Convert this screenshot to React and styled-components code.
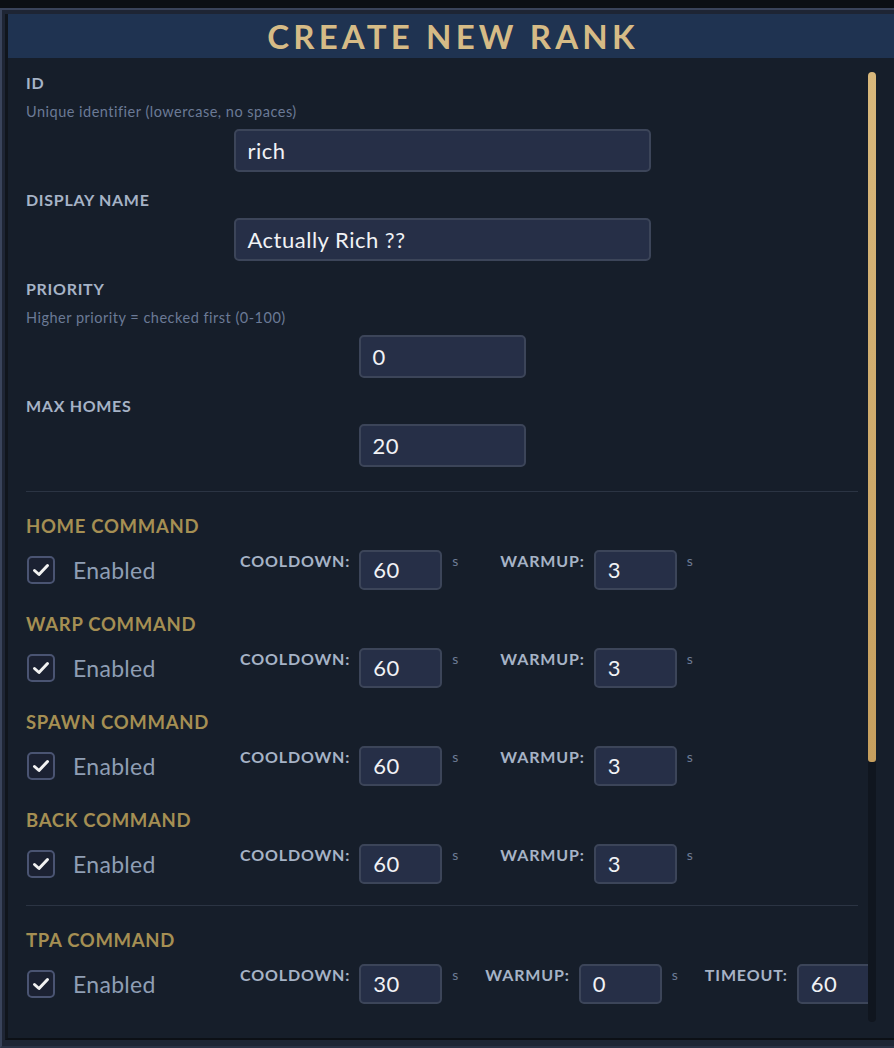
import React from 'react';
import styled, { createGlobalStyle } from 'styled-components';

const GlobalStyle = createGlobalStyle`
  html, body {
    margin: 0;
    padding: 0;
    background: #0b0f14;
    overflow: hidden;
  }
  * { box-sizing: border-box; }
`;

const Frame = styled.div`
  margin-top: 8px;
  height: 1040px;
  width: 904px;
  background: #1e2534;
  border-top: 2px solid #39435a;
  border-left: 2px solid #39435a;
  border-bottom: 2px solid #2a3245;
  padding: 4px 0 6px 3px;
  font-family: Lato, "Noto Sans", sans-serif;
`;

const Panel = styled.div`
  height: 100%;
  display: flex;
  flex-direction: column;
  border-left: 3px solid #10151c;
  border-bottom: 2px solid #0c1016;
  background: #161e2a;
`;

const Header = styled.div`
  height: 44px;
  flex: none;
  background: #1f3351;
  display: flex;
  align-items: center;
  justify-content: center;
  padding-right: 6px;
`;

const Title = styled.h1`
  margin: 0;
  font: 700 33px/1 Lato, sans-serif;
  letter-spacing: 4.2px;
  color: #d6bb86;
`;

const Body = styled.div`
  position: relative;
  flex: 1;
  overflow: hidden;
  width: 868px;
`;

const Content = styled.div`
  padding: 16px 18px 0 18px;
`;

const Field = styled.div`
  display: flex;
  flex-direction: column;
  margin-bottom: 19px;
`;

const Label = styled.div`
  font: 700 16px/18px Lato, sans-serif;
  color: #a6b3c6;
  letter-spacing: 0.7px;
  margin-bottom: 9px;
`;

const Hint = styled.div`
  font: 400 14.5px/18px Lato, sans-serif;
  color: #6b7a96;
  letter-spacing: 0.5px;
  margin: 2px 0 8px;
`;

const TextInput = styled.div`
  align-self: center;
  width: ${p => p.$w}px;
  height: ${p => p.$h || 43}px;
  background: #262f47;
  border: 2px solid #3c4559;
  border-radius: 5px;
  display: flex;
  align-items: center;
  padding-left: 12px;
  font: 400 22px/1 Lato, sans-serif;
  letter-spacing: 0.5px;
  color: #f1f2f5;
  flex: none;
`;

const Divider = styled.hr`
  border: none;
  border-top: 1px solid #2b3443;
  margin: ${p => p.$top}px 0 23px;
`;

const Section = styled.div`
  margin-bottom: 23px;
`;

const SectionTitle = styled.div`
  font: 700 18.5px/22px Lato, sans-serif;
  color: #a58f53;
  letter-spacing: 0.7px;
  margin-bottom: 13px;
`;

const Row = styled.div`
  display: flex;
  align-items: flex-start;
  height: 40px;
  gap: ${p => p.$gap}px;
`;

const Toggle = styled.label`
  width: ${p => p.$w}px;
  height: 40px;
  flex: none;
  display: flex;
  align-items: center;
  gap: 18px;
  padding-left: 1px;
  font: 400 23px/1 Lato, sans-serif;
  letter-spacing: 0.3px;
  color: #8f9eb4;
`;

const Box = styled.span`
  width: 28px;
  height: 28px;
  border: 2px solid #4a5472;
  border-radius: 5px;
  background: #1b2132;
  display: flex;
  align-items: center;
  justify-content: center;
`;

const Group = styled.div`
  display: flex;
  align-items: flex-start;
  flex: none;
`;

const SmallLabel = styled.span`
  font: 700 16px/18px Lato, sans-serif;
  letter-spacing: 0.85px;
  color: #a6b3c6;
  margin-top: 2px;
  margin-right: 9px;
`;

const Unit = styled.span`
  font: 400 14px/18px Lato, sans-serif;
  color: #6e7c96;
  margin: 2px 0 0 10px;
`;

const Track = styled.div`
  position: absolute;
  left: 860px;
  top: 14px;
  width: 8px;
  height: 950px;
  background: #10161f;
  border-radius: 4px;
`;

const Thumb = styled.div`
  height: 690px;
  border-radius: 4px 4px 3px 3px;
  background: linear-gradient(#d8b87c, #c69f5e);
`;

const Check = () => (
  <Box>
    <svg width="18" height="14" viewBox="0 0 18 14">
      <path d="M2.5 7.5 L7 11.5 L15.5 2.5" fill="none" stroke="#f2f2f2" strokeWidth="3" strokeLinecap="round" strokeLinejoin="round" />
    </svg>
  </Box>
);

const Timing = ({ label, value, unit = true }) => (
  <Group>
    <SmallLabel>{label}</SmallLabel>
    <TextInput $w={83} $h={40}>{value}</TextInput>
    {unit && <Unit>s</Unit>}
  </Group>
);

const commands = [
  { name: 'HOME COMMAND', cooldown: 60, warmup: 3 },
  { name: 'WARP COMMAND', cooldown: 60, warmup: 3 },
  { name: 'SPAWN COMMAND', cooldown: 60, warmup: 3 },
  { name: 'BACK COMMAND', cooldown: 60, warmup: 3 },
];

const App = () => {
  return (
    <>
      <GlobalStyle />
      <Frame>
        <Panel>
          <Header>
            <Title>CREATE NEW RANK</Title>
          </Header>
          <Body>
            <Content>
              <Field>
                <Label>ID</Label>
                <Hint>Unique identifier (lowercase, no spaces)</Hint>
                <TextInput $w={417}>rich</TextInput>
              </Field>
              <Field>
                <Label>DISPLAY NAME</Label>
                <TextInput $w={417}>Actually Rich ??</TextInput>
              </Field>
              <Field>
                <Label>PRIORITY</Label>
                <Hint>Higher priority = checked first (0-100)</Hint>
                <TextInput $w={167}>0</TextInput>
              </Field>
              <Field>
                <Label>MAX HOMES</Label>
                <TextInput $w={167}>20</TextInput>
              </Field>

              <Divider $top={24} />

              {commands.map(c => (
                <Section key={c.name}>
                  <SectionTitle>{c.name}</SectionTitle>
                  <Row $gap={42}>
                    <Toggle $w={172}><Check />Enabled</Toggle>
                    <Timing label="COOLDOWN:" value={c.cooldown} />
                    <Timing label="WARMUP:" value={c.warmup} />
                  </Row>
                </Section>
              ))}

              <Divider $top={-2} />

              <Section>
                <SectionTitle>TPA COMMAND</SectionTitle>
                <Row $gap={27}>
                  <Toggle $w={187}><Check />Enabled</Toggle>
                  <Timing label="COOLDOWN:" value={30} />
                  <Timing label="WARMUP:" value={0} />
                  <Timing label="TIMEOUT:" value={60} unit={false} />
                </Row>
              </Section>
            </Content>
            <Track>
              <Thumb />
            </Track>
          </Body>
        </Panel>
      </Frame>
    </>
  );
};

export default App;
